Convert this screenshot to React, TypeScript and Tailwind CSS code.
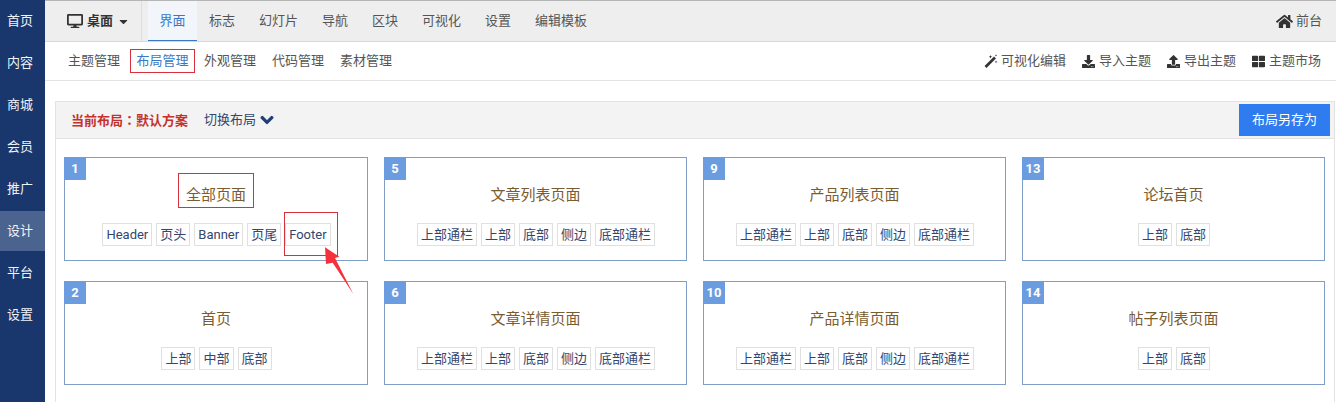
import { FaDesktop, FaCaretDown, FaHome, FaDownload, FaUpload, FaThLarge, FaChevronDown } from "react-icons/fa";

const side = ["首页", "内容", "商城", "会员", "推广", "设计", "平台", "设置"];
const top = ["标志", "幻灯片", "导航", "区块", "可视化", "设置", "编辑模板"];
const five = ["上部通栏", "上部", "底部", "侧边", "底部通栏"];
const two = ["上部", "底部"];
const cards = [
  { n: 1, t: "全部页面", tags: ["Header", "页头", "Banner", "页尾", "Footer"] },
  { n: 5, t: "文章列表页面", tags: five },
  { n: 9, t: "产品列表页面", tags: five },
  { n: 13, t: "论坛首页", tags: two },
  { n: 2, t: "首页", tags: ["上部", "中部", "底部"] },
  { n: 6, t: "文章详情页面", tags: five },
  { n: 10, t: "产品详情页面", tags: five },
  { n: 14, t: "帖子列表页面", tags: two },
];

function Wand() {
  return (
    <svg width="14" height="14" viewBox="0 0 14 14" className="text-[#333]">
      <path d="M1.5 13 L11 3.5" stroke="currentColor" strokeWidth="2.6" />
      <path d="M6.5 1 l.5 1.2 1.2.5 -1.2.5 -.5 1.2 -.5 -1.2 -1.2 -.5 1.2 -.5z M12 6.5 l.4 1 1 .4 -1 .4 -.4 1 -.4 -1 -1 -.4 1 -.4z M12 .3 l.3 .8 .8 .3 -.8 .3 -.3 .8 -.3 -.8 -.8 -.3 .8 -.3z" fill="currentColor" />
    </svg>
  );
}

function Card({ n, t, tags }: { n: number; t: string; tags: string[] }) {
  return (
    <div className={`relative h-[104px] border border-[#7f9fc6] bg-white flex flex-col items-center ${n === 1 ? "z-10" : ""}`}>
      <span className="absolute -left-px -top-px w-[22px] h-[23px] bg-[#6c9ce0] text-white text-[13px] font-bold flex items-center justify-center">{n}</span>
      <div className="mt-[27px] h-[20px] leading-[20px] text-[15px] text-[#7b5c30]">{t}</div>
      <div className="mt-[18px] ml-[1px] flex gap-[4px]">
        {tags.map((x, i) => (
          <span key={i} className="h-[23px] px-[3px] border border-[#e0e0e0] text-[13px] leading-[21px] text-[#34466e]">{x}</span>
        ))}
      </div>
      {n === 1 && (
        <>
          <span className="absolute left-[113px] top-[15px] w-[76px] h-[35px] border border-[#d9303e]" />
          <span className="absolute left-[219px] top-[54px] w-[54px] h-[44px] border border-[#d9303e]" />
          <svg className="absolute left-[258px] top-[88px]" width="36" height="52" viewBox="0 0 36 52">
            <path d="M2 1.3 L16.3 10.7 L12 12 L30.3 48 L9.7 16.7 L3 18 Z" fill="#f5323c" />
          </svg>
        </>
      )}
    </div>
  );
}

export default function App() {
  return (
    <div className="w-[1336px] h-[402px] overflow-hidden flex bg-white text-[13px] font-[family-name:Roboto,'Noto_Sans_CJK_SC',sans-serif]">
      <aside className="w-[45px] shrink-0 bg-[#19376d] flex flex-col text-[#f0f3f8] text-[13px]">
        {side.map((s) => (
          <div key={s} className={`shrink-0 flex items-center justify-center pr-[5px] ${s === "设计" ? "bg-[#4a648f] h-[40px] my-[1px]" : "h-[42px]"}`}>{s}</div>
        ))}
      </aside>
      <main className="flex-1 min-w-0 flex flex-col">
        <header className="h-[42px] shrink-0 bg-[#eeeeee] border-t border-t-[#b5b5b5] border-b border-b-[#d8d8d8] flex items-center text-[#555]">
          <div className="w-[97px] h-full pl-[22px] flex items-center gap-[4px] text-[#333] font-bold border-r border-r-[#dddddd]">
            <FaDesktop className="text-[16px]" />
            <span className="text-[13px]">桌面</span>
            <FaCaretDown className="text-[13px]" />
          </div>
          <div className="ml-[6px] w-[49px] h-full flex items-center justify-center bg-[#f2f6fb] text-[#3b78c4] border-b border-b-[#3b78c4]">界面</div>
          <div className="flex gap-[24px] pl-[12px]">
            {top.map((t) => <span key={t}>{t}</span>)}
          </div>
          <div className="ml-auto pr-[14px] flex items-center gap-[3px] text-[#555]">
            <FaHome className="text-[17px] text-[#333]" />
            <span>前台</span>
          </div>
        </header>
        <nav className="h-[39px] shrink-0 border-b border-b-[#e3e3e3] flex items-center text-[#555] pl-[23px] pr-[15px]">
          <span>主题管理</span>
          <span className="ml-[10px] w-[65px] h-[24px] border border-[#d9303e] text-[#3b78c4] flex items-center justify-center">布局管理</span>
          <span className="ml-[9px]">外观管理</span>
          <span className="ml-[16px]">代码管理</span>
          <span className="ml-[16px]">素材管理</span>
          <div className="ml-auto flex items-center gap-[16px]">
            <span className="flex items-center gap-[3px]"><Wand />可视化编辑</span>
            <span className="flex items-center gap-[4px]"><FaDownload className="text-[13px] text-[#333]" />导入主题</span>
            <span className="flex items-center gap-[4px]"><FaUpload className="text-[13px] text-[#333]" />导出主题</span>
            <span className="flex items-center gap-[4px]"><FaThLarge className="text-[13px] text-[#333]" />主题市场</span>
          </div>
        </nav>
        <section className="mt-[20px] ml-[10px] mr-px flex-1 border border-[#e3e3e3] border-b-0">
          <div className="h-[37px] bg-[#f3f3f3] border-b border-b-[#e3e3e3] flex items-center pl-[15px] pr-[4px]">
            <b className="text-[#c5322c] text-[13px]">当前布局<span className="font-[family-name:'Noto_Sans_CJK_TC']">：</span>默认方案</b>
            <span className="ml-[16px] text-[#34466e] flex items-center gap-[4px]">切换布局<FaChevronDown className="text-[14px] text-[#1f3f78] stroke-[40px]" /></span>
            <span className="ml-auto w-[91px] h-[32px] bg-[#2f7cf0] text-white flex items-center justify-center">布局另存为</span>
          </div>
          <div className="grid grid-cols-[304px_303px_303px_303px] gap-x-[16px] gap-y-[20px] pl-[8px] pt-[18px]">
            {cards.map((c) => <Card key={c.n} {...c} />)}
          </div>
        </section>
      </main>
    </div>
  );
}
